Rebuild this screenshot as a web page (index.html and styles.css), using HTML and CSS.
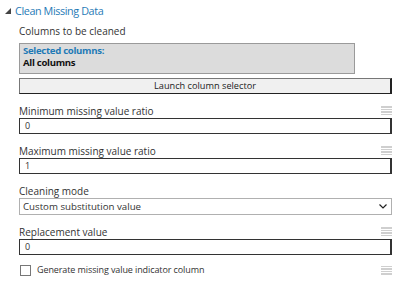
FILE: index.html
```html
<!DOCTYPE html>
<html>
<head>
<meta charset="utf-8">
<link rel="stylesheet" href="styles.css">
</head>
<body>
<div class="panel">
  <div class="title">
    <svg class="caret" width="6" height="6" viewBox="0 0 6 6"><polygon points="6,0 6,6 0,6" fill="#444"/></svg>
    <span>Clean Missing Data</span>
  </div>
  <div class="content">
    <div class="label first">Columns to be cleaned</div>
    <div class="selbox">
      <div class="sel-title">Selected columns:</div>
      <div class="sel-value">All columns</div>
    </div>
    <div class="launch">Launch column selector</div>

    <div class="field">
      <div class="head"><span class="label">Minimum missing value ratio</span><span class="grip"><i></i><i></i><i></i><i></i></span></div>
      <div class="input">0</div>
    </div>
    <div class="field">
      <div class="head"><span class="label">Maximum missing value ratio</span><span class="grip"><i></i><i></i><i></i><i></i></span></div>
      <div class="input">1</div>
    </div>
    <div class="field">
      <div class="head"><span class="label">Cleaning mode</span></div>
      <div class="select"><span>Custom substitution value</span>
        <svg width="8" height="5" viewBox="0 0 8 5"><polyline points="0.5,0.5 4,4 7.5,0.5" fill="none" stroke="#222" stroke-width="1.2"/></svg>
      </div>
    </div>
    <div class="field">
      <div class="head"><span class="label">Replacement value</span><span class="grip"><i></i><i></i><i></i><i></i></span></div>
      <div class="input">0</div>
    </div>
    <div class="check-row">
      <span class="box"></span>
      <span class="label check-label">Generate missing value indicator column</span>
      <span class="grip"><i></i><i></i><i></i><i></i></span>
    </div>
  </div>
</div>
</body>
</html>
```
FILE: styles.css
```css
html, body {
  margin: 0;
  padding: 0;
  background: #fff;
}
body {
  font-family: "Open Sans", "Noto Sans", sans-serif;
  color: #333;
  font-size: 10px;
  width: 400px;
  height: 283px;
  overflow: hidden;
}
.panel {
  padding-top: 2px;
}
.title {
  display: flex;
  align-items: center;
  height: 16px;
  padding-left: 5px;
  color: #1f7ab6;
  font-size: 10.8px;
  letter-spacing: -0.4px;
}
.caret {
  margin-right: 4px;
  margin-top: 1px;
}
.content {
  padding-left: 19px;
  padding-right: 8px;
}
.label {
  font-size: 10px;
  color: #333;
  line-height: 14px;
}
.label.first {
  margin-top: 6px;
}
.selbox {
  margin-top: 5px;
  height: 31px;
  width: 336px;
  box-sizing: border-box;
  background: #dcdcdc;
  border: 1px solid #9a9a9a;
  padding: 1px 3px 0;
  font-weight: bold;
  font-size: 9.6px;
  letter-spacing: -0.3px;
  line-height: 12px;
}
.sel-title {
  color: #1f7ab6;
}
.sel-value {
  color: #111;
}
.launch {
  margin-top: 4px;
  height: 16px;
  box-sizing: border-box;
  border: 1px solid #777;
  border-right: 2px solid #222;
  border-bottom: 1px solid #222;
  background: #f0f0f0;
  text-align: center;
  line-height: 14px;
  font-size: 9.2px;
  color: #222;
}
.field {
  margin-top: 10px;
}
.head {
  display: flex;
  justify-content: space-between;
  align-items: flex-end;
  height: 14px;
}
.grip {
  display: flex;
  flex-direction: column;
  justify-content: space-between;
  width: 11px;
  height: 9px;
  margin-bottom: 3px;
}
.grip i {
  display: block;
  height: 1.5px;
  background: #cfcfcf;
}
.input {
  height: 16px;
  box-sizing: border-box;
  border: 1px solid #333;
  border-right-width: 2px;
  padding-left: 5px;
  line-height: 14px;
  font-size: 9px;
  color: #333;
  background: #fff;
}
.select {
  height: 17px;
  box-sizing: border-box;
  border: 1px solid #b0b0b0;
  display: flex;
  align-items: center;
  justify-content: space-between;
  padding: 0 4px 0 3px;
  font-size: 9.7px;
  color: #333;
}
.check-row {
  display: flex;
  align-items: center;
  margin-top: 9px;
  height: 12px;
}
.box {
  width: 9px;
  height: 9px;
  border: 1px solid #777;
  margin-left: 1px;
  margin-right: 6px;
  background: #fff;
}
.check-row .check-label {
  flex: 1;
  font-size: 9px;
  letter-spacing: -0.1px;
}
.check-row .grip {
  margin-bottom: 0;
}
```
